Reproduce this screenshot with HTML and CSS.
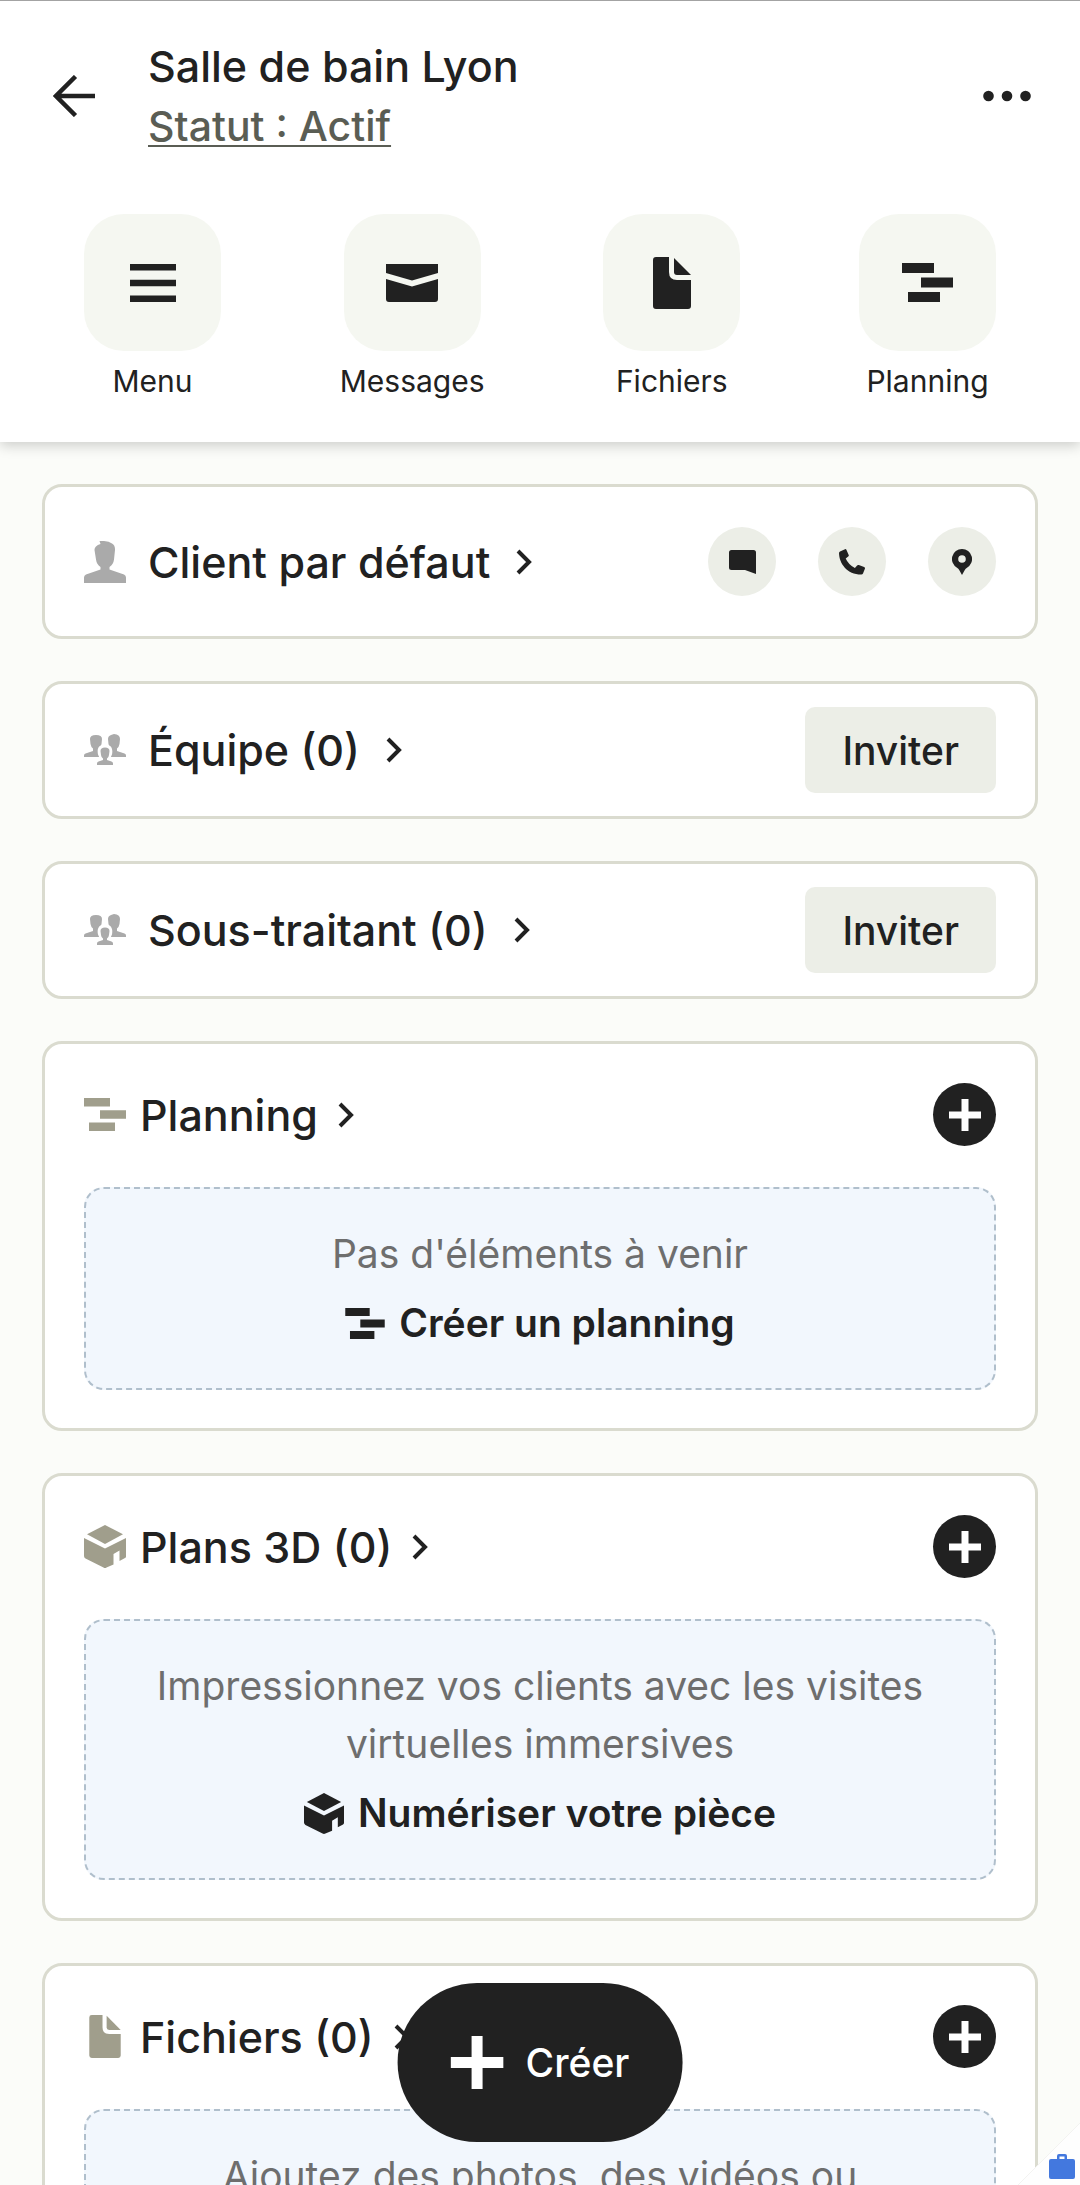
FILE: index.html
```html
<!DOCTYPE html>
<html lang="fr">
<head>
<meta charset="utf-8">
<meta name="viewport" content="width=device-width, initial-scale=1">
<title>Salle de bain Lyon</title>
<link rel="stylesheet" href="styles.css">
</head>
<body>
<svg class="sprite" aria-hidden="true">
  <symbol id="i-gantt" viewBox="0 0 42 33"><path d="M0 0h26v8.500H0zM16 12.200h26v8.500H16zM5 24.500h26V33H5z"/></symbol>
  <symbol id="i-file" viewBox="0 0 38 52"><path d="M3 0h13v15q0 8 8 8h14v26q0 3-3 3H3q-3 0-3-3V3Q0 0 3 0z"/><path d="M21 1v14q0 3 3 3h14z"/></symbol>
  <symbol id="i-cube" viewBox="0 0 42 43"><path d="M21 0l18 9.300-18 9.700L3 9.300z"/><path d="M0 13l21 10.500L42 13v18.500q0 1-1 1.500l-5.500 3V25.500l-6 3.500v10.500l-7 3q-1.500 1-3 0L1.500 33.500Q0 32.500 0 31z"/></symbol>
  <symbol id="i-chevron" viewBox="0 0 16 26"><path d="M2 2l11 11L2 24" fill="none" stroke="currentColor" stroke-width="4"/></symbol>
  <symbol id="i-plus" viewBox="0 0 32 32"><path d="M12.500 0h7v12.500H32v7H19.500V32h-7V19.500H0v-7h12.500z"/></symbol>
  <symbol id="i-person" viewBox="0 0 42 42"><path d="M15.500 0Q24-.5 28 2.500q3.300 2 3 6.500l-1 9.500q-.5 4.500-4.500 7.500v2.500L40 33.500q2 .8 2 3V42H0v-5.500q0-2.200 2-3l14.500-5V26q-4-3-4.500-7.500L10.500 9q-.2-4 6-6z"/></symbol>
  <symbol id="i-team" viewBox="0 0 42 32"><path d="M6 5q0-4 6-4t6 4l-.5 5q-.5 3-2.500 4.500V23H0v-1.500Q0 20 1.500 19.500L9 17v-2.500Q7 13 6.500 10z"/><path d="M24 5q0-3 3-4l3-1q6 .5 6 5l-.5 5q-.5 3-2.500 4.500V17l7.500 2.500Q42 20 42 21.500V23H27v-8.500Q25 13 24.500 10z"/><path d="M21 10.500c7 0 8 5 7 10l-2 4.500 6 7H10l6-7-2-4.500c-1-5 0-10 7-10z" fill="#fff"/><path d="M16.500 17q0-3.500 4.500-3.500t4.500 3.500l-.5 4q-.3 2.500-2 3.500v1.500l4.500 1.500q1.500.5 1.500 2V31H13v-1.500q0-1.500 1.500-2L19 26v-1.500q-1.700-1-2-3.500z"/></symbol>
</svg>

<div class="app">
  <header class="header">
    <div class="topbar">
      <button class="plain" aria-label="Retour">
        <svg width="42" height="42" viewBox="0 0 42 42"><path d="M22.500 1.500L3 21l19.500 19.500M3 21h39" fill="none" stroke="currentColor" stroke-width="4.500"/></svg>
      </button>
      <div class="heading">
        <h1 class="title">Salle de bain Lyon</h1>
        <a class="status" href="#statut">Statut : Actif</a>
      </div>
      <button class="plain" aria-label="Plus d'options">
        <svg width="48" height="12" viewBox="0 0 48 12"><circle cx="5.500" cy="6" r="5.300"/><circle cx="24" cy="6" r="5.300"/><circle cx="42.500" cy="6" r="5.300"/></svg>
      </button>
    </div>
    <nav class="shortcuts">
      <a class="shortcut" href="#menu">
        <span class="tile"><svg width="46" height="40" viewBox="0 0 46 40"><path d="M0 1h46v6.500H0zM0 16.700h46v6.500H0zM0 32.500h46V39H0z"/></svg></span>
        <span>Menu</span>
      </a>
      <a class="shortcut" href="#messages">
        <span class="tile"><svg width="52" height="38" viewBox="0 0 52 38"><path d="M0 0h52v9L26 16.500 0 9z"/><path d="M0 15l26 7.500L52 15v20q0 3-3 3H3q-3 0-3-3z"/></svg></span>
        <span>Messages</span>
      </a>
      <a class="shortcut" href="#fichiers">
        <span class="tile"><svg width="38" height="52"><use href="#i-file"/></svg></span>
        <span>Fichiers</span>
      </a>
      <a class="shortcut" href="#planning">
        <span class="tile"><svg width="51" height="39" viewBox="0 0 51 39"><path d="M0 0h32v10H0zM19 14.500h32v10H19zM6 29h32v10H6z"/></svg></span>
        <span>Planning</span>
      </a>
    </nav>
  </header>

  <main class="content">
    <section class="card card-contact">
      <a class="link" href="#client">
        <svg class="lead-grey" width="42" height="42"><use href="#i-person"/></svg>
        <span>Client par défaut</span>
        <svg class="chevron" width="16" height="26"><use href="#i-chevron"/></svg>
      </a>
      <div class="contacts">
        <button class="round" aria-label="Message"><svg width="27" height="24" viewBox="0 0 27 24"><path d="M2.500 0h22Q27 0 27 2.500V24l-11-4H2.500Q0 20 0 17.500v-15Q0 0 2.500 0z"/></svg></button>
        <button class="round" aria-label="Appeler"><svg width="26" height="26" viewBox="0 0 26 26"><path d="M1 2.500L6 .2q1-.4 1.500.7l2.200 5q.4 1-.5 1.700L6.700 9.500q2.600 6 9.200 9.600l2.200-2.600q.7-.9 1.700-.4l5.300 2q1.200.5.800 1.600l-1.900 4.800q-.5 1.200-1.800 1.100C8 25.500.2 14.500 0 4q0-1 1-1.500z"/></svg></button>
        <button class="round" aria-label="Adresse"><svg width="20" height="26" viewBox="0 0 20 26"><path fill-rule="evenodd" d="M10 0a10 10 0 0 1 5 18.700q-1.500.8-2.200 2.300L10 26l-2.800-5q-.7-1.500-2.200-2.300A10 10 0 0 1 10 0zm0 6.200a3.800 3.800 0 1 0 0 7.600 3.800 3.800 0 0 0 0-7.600z"/></svg></button>
      </div>
    </section>

    <section class="card card-row">
      <a class="link" href="#equipe">
        <svg class="lead-grey" width="42" height="32"><use href="#i-team"/></svg>
        <span>Équipe (0)</span>
        <svg class="chevron" width="16" height="26"><use href="#i-chevron"/></svg>
      </a>
      <button class="invite">Inviter</button>
    </section>

    <section class="card card-row">
      <a class="link" href="#sous-traitant">
        <svg class="lead-grey" width="42" height="32"><use href="#i-team"/></svg>
        <span>Sous-traitant (0)</span>
        <svg class="chevron" width="16" height="26"><use href="#i-chevron"/></svg>
      </a>
      <button class="invite">Inviter</button>
    </section>

    <section class="card card-section" id="planning">
      <div class="section-head">
        <a class="link link-tight" href="#planning">
          <svg class="lead-olive" width="42" height="33"><use href="#i-gantt"/></svg>
          <span>Planning</span>
          <svg class="chevron" width="16" height="26"><use href="#i-chevron"/></svg>
        </a>
        <button class="add" aria-label="Ajouter un planning"><svg width="32" height="32"><use href="#i-plus"/></svg></button>
      </div>
      <div class="empty">
        <p class="hint">Pas d'éléments à venir</p>
        <button class="cta"><svg width="40" height="31"><use href="#i-gantt"/></svg>Créer un planning</button>
      </div>
    </section>

    <section class="card card-section" id="plans">
      <div class="section-head">
        <a class="link link-tight" href="#plans">
          <svg class="lead-olive" width="42" height="43"><use href="#i-cube"/></svg>
          <span>Plans 3D (0)</span>
          <svg class="chevron" width="16" height="26"><use href="#i-chevron"/></svg>
        </a>
        <button class="add" aria-label="Ajouter un plan 3D"><svg width="32" height="32"><use href="#i-plus"/></svg></button>
      </div>
      <div class="empty">
        <p class="hint">Impressionnez vos clients avec les visites virtuelles immersives</p>
        <button class="cta"><svg width="40" height="41"><use href="#i-cube"/></svg>Numériser votre pièce</button>
      </div>
    </section>

    <section class="card card-section" id="fichiers">
      <div class="section-head">
        <a class="link link-tight" href="#fichiers">
          <svg class="lead-olive" width="42" height="43"><use href="#i-file"/></svg>
          <span>Fichiers (0)</span>
          <svg class="chevron" width="16" height="26"><use href="#i-chevron"/></svg>
        </a>
        <button class="add" aria-label="Ajouter un fichier"><svg width="32" height="32"><use href="#i-plus"/></svg></button>
      </div>
      <div class="empty">
        <p class="hint">Ajoutez des photos, des vidéos ou</p>
      </div>
    </section>
  </main>

  <button class="create"><svg width="53" height="53" viewBox="0 0 53 53"><path d="M21 0h11v21h21v11H32v21H21V32H0V21h21z"/></svg>Créer</button>

  <svg class="corner" width="62" height="62" viewBox="0 0 62 62" aria-hidden="true">
    <path d="M62 0v62H0z" fill="#fefefe"/>
    <path d="M62 0L0 62" stroke="#f3f3f1"/>
    <path fill="#4378de" fill-rule="evenodd" d="M39 36v-3q0-2 2-2h6q2 0 2 2v3h6q2 0 2 2v16q0 2-2 2H33q-2 0-2-2V38q0-2 2-2zm2.500 0h5v-2.500h-5z"/>
  </svg>
</div>
</body>
</html>
```
FILE: styles.css
```css
* {
  box-sizing: border-box;
}

body {
  margin: 0;
  background: #fbfcf9;
  color: #212121;
  font-family: Inter, "Liberation Sans", sans-serif;
  font-size: 39px;
  font-weight: 500;
}

h1,
p {
  margin: 0;
  font: inherit;
}

a {
  color: inherit;
  text-decoration: none;
}

button {
  padding: 0;
  border: 0;
  color: inherit;
  font: inherit;
  cursor: pointer;
}

svg {
  display: block;
  flex: none;
  fill: currentColor;
}

.sprite {
  position: absolute;
  width: 0;
  height: 0;
}

.app {
  position: relative;
  display: flex;
  flex-direction: column;
  height: 100vh;
  overflow: hidden;
}

/* Header */

.header {
  position: relative;
  z-index: 1;
  flex: none;
  padding-bottom: 41px;
  border-top: 1px solid #a3a3a3;
  background: #fff;
  box-shadow: 0 4px 12px rgba(0, 0, 0, 0.18);
}

.topbar {
  display: flex;
  align-items: center;
  gap: 53px;
  padding: 35px 49px 0 53px;
}

.plain {
  background: none;
}

.heading {
  flex: 1;
  line-height: 60px;
}

.title {
  font-size: 43px;
}

.status {
  display: block;
  width: fit-content;
  color: #5a5d54;
  font-size: 41px;
  text-decoration: underline;
  text-decoration-thickness: 2px;
  text-underline-offset: 4px;
  text-decoration-skip-ink: none;
}

.shortcuts {
  display: flex;
  justify-content: space-between;
  padding: 58px 84px 0;
  font-size: 30px;
  font-weight: 400;
  line-height: 40px;
}

.shortcut {
  display: flex;
  flex-direction: column;
  align-items: center;
  gap: 10px;
}

.tile {
  display: grid;
  place-items: center;
  width: 137px;
  height: 137px;
  border-radius: 40px;
  background: #f5f7f1;
}

/* Cards */

.content {
  flex: 1;
  display: flex;
  flex-direction: column;
  gap: 42px;
  min-height: 0;
  padding: 42px 42px 0;
  overflow: hidden;
}

.card {
  flex: none;
  border: 3px solid #dadbcf;
  border-radius: 20px;
  background: #fff;
}

.card-contact,
.card-row,
.section-head {
  display: flex;
  align-items: center;
  justify-content: space-between;
}

.card-contact {
  padding: 40px 39px;
}

.card-row {
  padding: 23px 39px;
}

.card-section {
  padding: 39px 39px 38px;
}

.link {
  display: flex;
  align-items: center;
  gap: 22px;
  font-size: 43px;
  line-height: 60px;
}

.link-tight {
  gap: 14px;
}

.chevron {
  margin-left: 4px;
}

.link-tight .chevron {
  margin-left: 6px;
}

.lead-grey {
  color: #aaa;
}

.lead-olive {
  color: #a09e8c;
}

.contacts {
  display: flex;
  gap: 42px;
}

.round {
  display: grid;
  place-items: center;
  width: 68px;
  height: 69px;
  border-radius: 50%;
  background: #eceee7;
}

.invite {
  height: 86px;
  padding: 0 37px;
  border-radius: 10px;
  background: #eceee7;
}

.add {
  display: grid;
  place-items: center;
  width: 63px;
  height: 63px;
  border-radius: 50%;
  background: #212121;
  color: #fff;
}

/* Empty state */

.empty {
  display: flex;
  flex-direction: column;
  align-items: center;
  gap: 11px;
  margin-top: 41px;
  padding: 36px 40px;
  border: 2px dashed #b0bfcc;
  border-radius: 20px;
  background: #f2f7fd;
  line-height: 58px;
  text-align: center;
}

.hint {
  color: #6e6e6e;
  font-weight: 400;
}

.cta {
  display: flex;
  align-items: center;
  gap: 14px;
  background: none;
  font-weight: 600;
}

/* Floating elements */

.create {
  position: absolute;
  z-index: 2;
  bottom: 43px;
  left: 50%;
  display: flex;
  align-items: center;
  gap: 22px;
  height: 159px;
  padding: 0 53px;
  border-radius: 80px;
  background: #212121;
  color: #fff;
  transform: translateX(-50%);
}

.corner {
  position: absolute;
  right: 0;
  bottom: 0;
}
```
